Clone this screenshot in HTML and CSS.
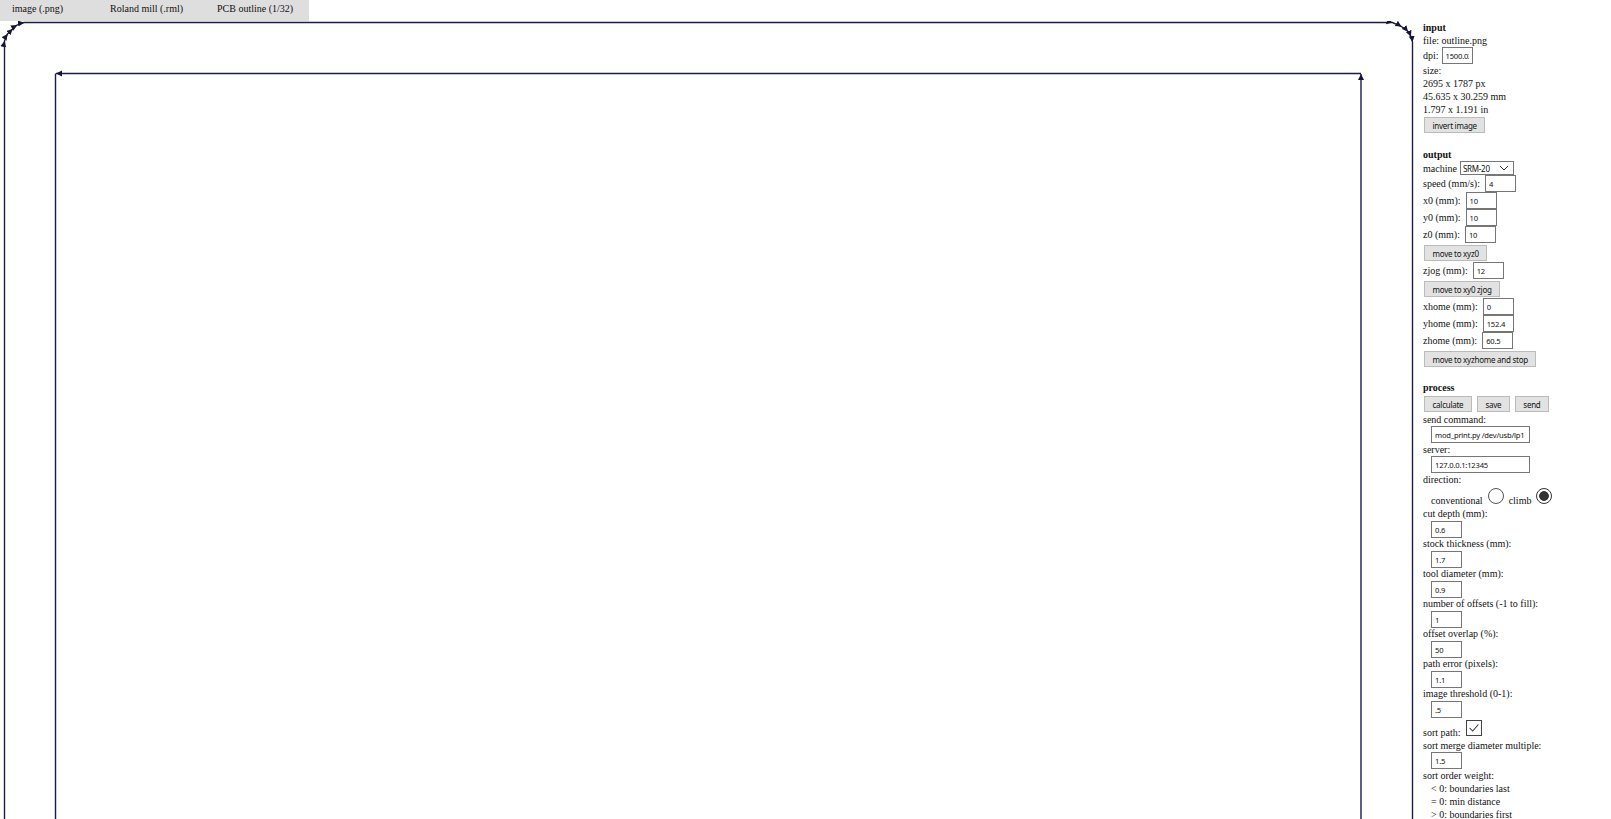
FILE: index.html
```html
<!DOCTYPE html>
<html lang="en">
<head>
    <meta charset="UTF-8">
    <title>mods</title>
    <link rel="stylesheet" href="styles.css">
</head>
<body>
    <div class="tabs">
        <span>image (.png)</span>
        <span>Roland mill (.rml)</span>
        <span>PCB outline (1/32)</span>
    </div>

    <div class="main">
        <svg class="toolpath" width="1415" height="798" viewBox="0 21 1415 798">
            <defs>
                <marker id="head" markerUnits="userSpaceOnUse" markerWidth="8" markerHeight="8" refX="6" refY="3" orient="auto">
                    <path d="M0 0 L6 3 L0 6 Z" fill="#14143c"></path>
                </marker>
            </defs>
            <!-- outer cut, clockwise -->
            <polyline class="cut" points="4.5,830 4.5,41 7.5,34 12.7,29 17,25 24,22.5 1392.5,22.5 1401.5,26.5 1408,31.5 1411,36.5 1412.5,42 1412.5,830"></polyline>
            <!-- inner cut, counter clockwise -->
            <polyline class="cut" points="1361,830 1361,74"></polyline>
            <polyline class="cut" points="1361,73.5 56,73.5"></polyline>
            <polyline class="cut plain" points="55.5,73.5 55.5,830"></polyline>
        </svg>

        <div class="panel">
            <div class="group">
                <div class="line"><b>input</b></div>
                <div class="line">file: outline.png</div>
                <div class="row dpi">dpi: <input class="num" type="text" value="1500.02"></div>
                <div class="line">size:</div>
                <div class="line">2695 x 1787 px</div>
                <div class="line">45.635 x 30.259 mm</div>
                <div class="line">1.797 x 1.191 in</div>
                <div class="buttons"><button>invert image</button></div>
            </div>

            <div class="group">
                <div class="line"><b>output</b></div>
                <div class="row machine">machine
                    <span class="select-wrap">
                        <select><option>SRM-20</option></select>
                        <svg class="chevron" width="10" height="6" viewBox="0 0 10 6"><path d="M1 1 L5 5 L9 1"></path></svg>
                    </span>
                </div>
                <div class="row">speed (mm/s): <input class="num" type="text" value="4"></div>
                <div class="row">x0 (mm): <input class="num" type="text" value="10"></div>
                <div class="row">y0 (mm): <input class="num" type="text" value="10"></div>
                <div class="row">z0 (mm): <input class="num" type="text" value="10"></div>
                <div class="buttons"><button>move to xyz0</button></div>
                <div class="row">zjog (mm): <input class="num" type="text" value="12"></div>
                <div class="buttons"><button>move to xy0 zjog</button></div>
                <div class="row">xhome (mm): <input class="num" type="text" value="0"></div>
                <div class="row">yhome (mm): <input class="num" type="text" value="152.4"></div>
                <div class="row">zhome (mm): <input class="num" type="text" value="60.5"></div>
                <div class="buttons"><button>move to xyzhome and stop</button></div>
            </div>

            <div class="group">
                <div class="line"><b>process</b></div>
                <div class="buttons">
                    <button>calculate</button>
                    <button>save</button>
                    <button>send</button>
                </div>
                <div class="line">send command:</div>
                <div class="indent top"><input class="wide" type="text" value="mod_print.py /dev/usb/lp1"></div>
                <div class="line">server:</div>
                <div class="indent top"><input class="wide" type="text" value="127.0.0.1:12345"></div>
                <div class="line">direction:</div>
                <div class="radios">
                    conventional <input type="radio" name="direction"> climb <input type="radio" name="direction" checked>
                </div>
                <div class="line">cut depth (mm):</div>
                <div class="indent"><input class="num" type="text" value="0.6"></div>
                <div class="line">stock thickness (mm):</div>
                <div class="indent"><input class="num" type="text" value="1.7"></div>
                <div class="line">tool diameter (mm):</div>
                <div class="indent"><input class="num" type="text" value="0.9"></div>
                <div class="line">number of offsets (-1 to fill):</div>
                <div class="indent"><input class="num" type="text" value="1"></div>
                <div class="line">offset overlap (%):</div>
                <div class="indent"><input class="num" type="text" value="50"></div>
                <div class="line">path error (pixels):</div>
                <div class="indent"><input class="num" type="text" value="1.1"></div>
                <div class="line">image threshold (0-1):</div>
                <div class="indent"><input class="num" type="text" value=".5"></div>
                <div class="sort">sort path:
                    <span class="check"><svg width="16" height="16" viewBox="0 0 16 16"><path d="M3 8 L6.5 11.5 L13 4"></path></svg></span>
                </div>
                <div class="line">sort merge diameter multiple:</div>
                <div class="indent top"><input class="num" type="text" value="1.5"></div>
                <div class="line">sort order weight:</div>
                <div class="line indent-text">&lt; 0: boundaries last</div>
                <div class="line indent-text">= 0: min distance</div>
                <div class="line indent-text">&gt; 0: boundaries first</div>
            </div>
        </div>
    </div>
</body>
</html>
```

FILE: styles.css
```css
html, body {
    overflow: hidden;
    height: 100%;
}

body {
    margin: 0;
    background: #fff;
    color: #111;
    font-family: "Liberation Serif", serif;
    font-size: 10px;
    line-height: 13px;
}

.tabs {
    display: grid;
    grid-template-columns: 98px 107px 104px;
    width: 309px;
    height: 21px;
    box-sizing: border-box;
    padding: 2px 0 0 12px;
    background-color: #dedede;
}

.main {
    display: flex;
}

.toolpath {
    flex: none;
    display: block;
}

.cut {
    fill: none;
    stroke: #1c1c4c;
    stroke-width: 1.4;
    marker-mid: url(#head);
    marker-end: url(#head);
}

.cut.plain {
    marker-end: none;
}

.panel {
    padding: 0 0 0 8px;
}

.group {
    margin-bottom: 13px;
}

.line {
    height: 13px;
}

.row {
    display: flex;
    align-items: center;
    gap: 5px;
    height: 17px;
}

.dpi {
    gap: 3px;
}

.machine {
    height: 14px;
    gap: 3px;
}

button,
select {
    font-family: "Noto Sans", sans-serif;
    font-size: 8px;
    letter-spacing: -0.25px;
    color: #111;
}

input[type="text"] {
    box-sizing: border-box;
    height: 17px;
    margin: 0;
    padding: 0 3px;
    border: 1px solid #767676;
    background-color: #fff;
    font-family: "Noto Sans", sans-serif;
    font-size: 7.6px;
    letter-spacing: -0.2px;
    color: #111;
}

.num {
    width: 31px;
}

.wide {
    width: 99px;
}

.indent {
    height: 16px;
    padding: 1px 0 0 8px;
}

.indent.top {
    height: 17px;
    padding-top: 0;
}

.indent-text {
    padding-left: 8px;
}

.buttons {
    display: flex;
    gap: 5px;
    padding: 2px 1px 1px;
}

.group:first-child .buttons {
    padding: 1px 1px 2px;
}

button {
    height: 16px;
    margin: 0;
    padding: 0 7.5px;
    border: 1px solid #bbb;
    background-color: #e2e2e2;
}

.select-wrap {
    position: relative;
    display: block;
}

select {
    display: block;
    appearance: none;
    width: 54px;
    height: 14px;
    padding: 0 2px;
    border: 1px solid #767676;
    border-radius: 0;
    background-color: #fff;
}

.chevron {
    position: absolute;
    top: 4px;
    right: 5px;
    fill: none;
    stroke: #333;
}

.radios {
    display: flex;
    align-items: flex-end;
    gap: 2px;
    height: 21px;
    padding-left: 8px;
}

input[type="radio"] {
    appearance: none;
    box-sizing: border-box;
    width: 16px;
    height: 16px;
    margin: 0 3px 3px;
    border: 1px solid #555;
    border-radius: 50%;
    background-color: #fff;
}

input[type="radio"]:checked {
    border: 1px solid #333;
    background: radial-gradient(circle, #333 0, #333 4.5px, #fff 5.2px);
}

.sort {
    display: flex;
    align-items: flex-end;
    gap: 5px;
    height: 22px;
}

.check {
    display: block;
    box-sizing: border-box;
    width: 16px;
    height: 16px;
    margin-bottom: 3px;
    border: 1px solid #444;
}

.check svg {
    display: block;
    width: 14px;
    height: 14px;
    fill: none;
    stroke: #333;
    stroke-width: 1.2;
}
```
